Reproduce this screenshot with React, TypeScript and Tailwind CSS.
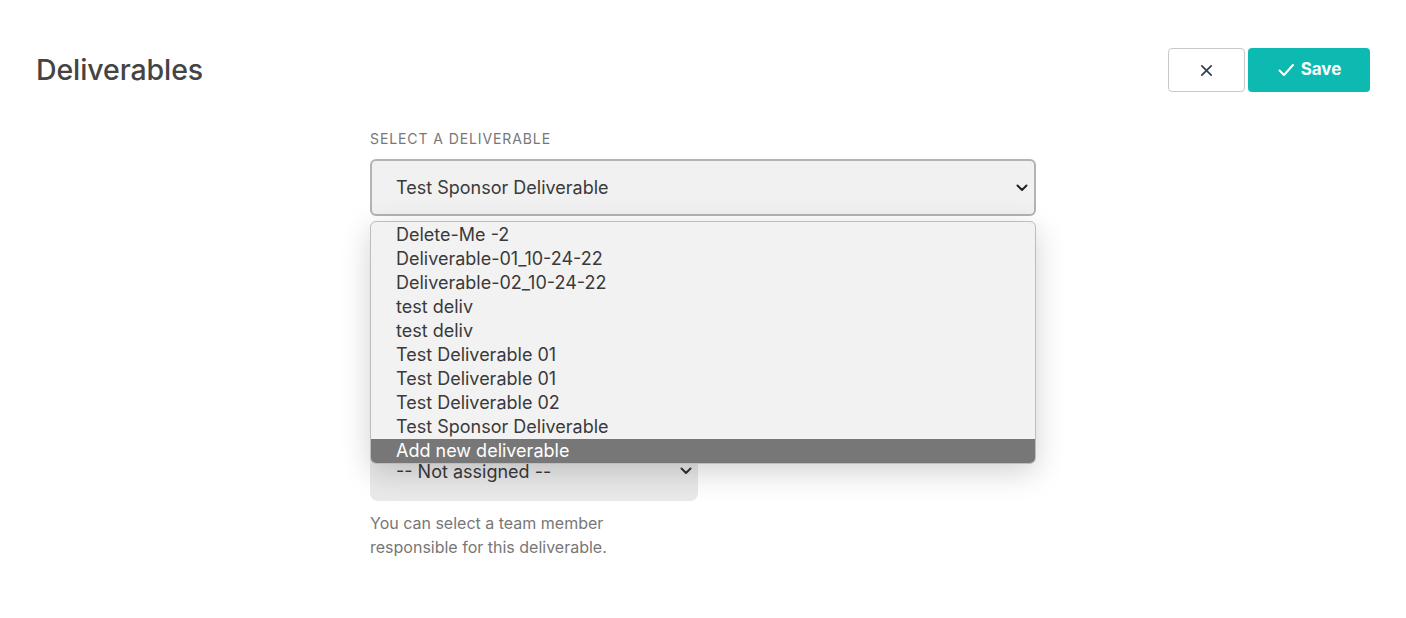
import React from "react";

const items = [
  "Delete-Me -2",
  "Deliverable-01_10-24-22",
  "Deliverable-02_10-24-22",
  "test deliv",
  "test deliv",
  "Test Deliverable 01",
  "Test Deliverable 01",
  "Test Deliverable 02",
  "Test Sponsor Deliverable",
];

function Chevron({ className = "" }: { className?: string }) {
  return (
    <svg viewBox="0 0 12 8" className={className} fill="none" stroke="currentColor" strokeWidth="2" strokeLinecap="round" strokeLinejoin="round">
      <path d="M1.5 1.5 6 6l4.5-4.5" />
    </svg>
  );
}

export default function App() {
  return (
    <div className="min-h-[618px] bg-white text-[#3f3f3f]" style={{ fontFamily: "Inter, 'Noto Sans', sans-serif" }}>
      <div className="flex items-center justify-between pl-9 pr-[36px] pt-12">
        <h1 className="text-[28.5px] font-medium leading-[44px] text-[#444] tracking-[-0.1px]">Deliverables</h1>
        <div className="flex gap-[3px]">
          <button className="flex h-11 w-[77px] items-center justify-center rounded-[4px] border border-[#c8c8c8] bg-white text-[#2d3e50]">
            <svg viewBox="0 0 16 16" className="h-[15px] w-[15px]" fill="none" stroke="currentColor" strokeWidth="1.8" strokeLinecap="round">
              <path d="M3 3l10 10M13 3 3 13" />
            </svg>
          </button>
          <button className="flex h-11 w-[122px] items-center justify-center gap-[6px] rounded-[4px] bg-[#0cbab1] text-[17px] font-bold text-white">
            <svg viewBox="0 0 18 18" className="h-[18px] w-[18px]" fill="none" stroke="currentColor" strokeWidth="2" strokeLinecap="round" strokeLinejoin="round">
              <path d="M2.5 9.5 7 14l9-10" />
            </svg>
            Save
          </button>
        </div>
      </div>

      <div className="mx-auto mt-[37px] w-[666px]">
        <div className="text-[14px] uppercase leading-5 tracking-[0.9px] text-[#777]">Select a deliverable</div>
        <div className="relative mt-[10px]">
          <div className="flex h-[57px] items-center justify-between rounded-[6px] border-2 border-[#b3b3b3] bg-[#f1f1f1] pl-[24px] pr-[6px] text-[18px] text-[#3a3a3a]">
            <span>Test Sponsor Deliverable</span>
            <Chevron className="h-[8px] w-[12px] text-[#222]" />
          </div>

          <div className="flex flex-col gap-6 pb-[69px] pt-8">
            <div className="h-[40px] rounded-md bg-[#f3f3f3]" />
            <div className="h-[60px] rounded-md bg-[#f3f3f3]" />
          </div>

          <div className="w-[328px]">
            <div className="flex h-[60px] items-center justify-between rounded-lg bg-[#e9e9e9] pl-[26px] pr-[6px] text-[18px] text-[#3a3a3a]">
              <span>-- Not assigned --</span>
              <Chevron className="h-[8px] w-[12px] text-[#333]" />
            </div>
            <p className="mt-[10px] text-[16px] leading-6 text-[#777]">
              You can select a team member
              <br />
              responsible for this deliverable.
            </p>
          </div>

          <div className="absolute left-0 top-[62px] w-[666px] overflow-hidden rounded-[6px] border border-[#bdbdbd] bg-[#f2f2f2] pt-[1px] shadow-[0_8px_30px_rgba(0,0,0,0.18)]">
            {items.map((t, i) => (
              <div key={i} className="h-6 pl-[25px] text-[18px] leading-6 text-[#3a3a3a]">
                {t}
              </div>
            ))}
            <div className="h-6 bg-[#777] pl-[25px] text-[18px] leading-6 text-white">Add new deliverable</div>
          </div>
        </div>
      </div>
    </div>
  );
}
